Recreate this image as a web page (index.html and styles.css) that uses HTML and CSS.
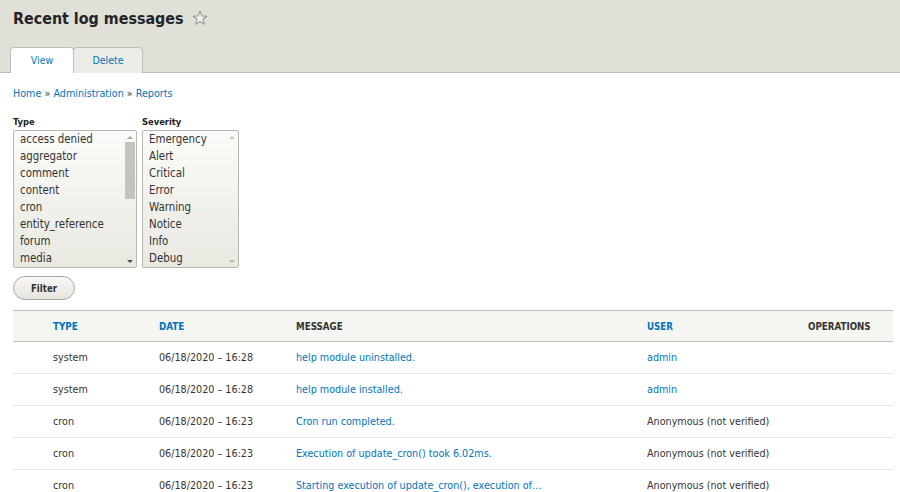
FILE: index.html
```html
<!DOCTYPE html>
<html lang="en">
<head>
<meta charset="utf-8">
<title>Recent log messages</title>
<link rel="stylesheet" href="styles.css">
</head>
<body>
<header class="page-header">
  <div class="title-row">
    <h1 class="page-title">Recent log messages</h1>
    <svg class="star" width="16" height="16" viewBox="0 0 16 16" aria-hidden="true">
      <polygon points="8,1.2 9.9,5.9 14.8,6.2 11,9.3 12.3,14.2 8,11.5 3.7,14.2 5,9.3 1.2,6.2 6.1,5.9" fill="#f2f2ee" stroke="#9a9a96" stroke-width="1.1" stroke-linejoin="round"/>
    </svg>
  </div>
  <nav class="tabs">
    <a class="tab tab-active" href="#">View</a>
    <a class="tab" href="#">Delete</a>
  </nav>
</header>

<main class="content">
  <div class="breadcrumb">
    <a href="#">Home</a> » <a href="#">Administration</a> » <a href="#">Reports</a>
  </div>

  <div class="filters">
    <div class="field">
      <div class="field-label">Type</div>
      <div class="listbox listbox-type">
        <ul class="options">
          <li>access denied</li>
          <li>aggregator</li>
          <li>comment</li>
          <li>content</li>
          <li>cron</li>
          <li>entity_reference</li>
          <li>forum</li>
          <li>media</li>
        </ul>
        <div class="scrollbar">
          <span class="arrow arrow-up"></span>
          <span class="thumb"></span>
          <span class="arrow arrow-down"></span>
        </div>
      </div>
    </div>
    <div class="field">
      <div class="field-label">Severity</div>
      <div class="listbox listbox-severity">
        <ul class="options">
          <li>Emergency</li>
          <li>Alert</li>
          <li>Critical</li>
          <li>Error</li>
          <li>Warning</li>
          <li>Notice</li>
          <li>Info</li>
          <li>Debug</li>
        </ul>
        <div class="scrollbar scrollbar-disabled">
          <span class="arrow arrow-up"></span>
          <span class="thumb thumb-none"></span>
          <span class="arrow arrow-down"></span>
        </div>
      </div>
    </div>
  </div>

  <button class="button" type="button">Filter</button>

  <table class="log-table">
    <colgroup>
      <col class="c-icon">
      <col class="c-type">
      <col class="c-date">
      <col class="c-msg">
      <col class="c-user">
      <col class="c-ops">
    </colgroup>
    <thead>
      <tr>
        <th></th>
        <th><a href="#">Type</a></th>
        <th><a href="#">Date</a></th>
        <th>Message</th>
        <th><a href="#">User</a></th>
        <th>Operations</th>
      </tr>
    </thead>
    <tbody>
      <tr>
        <td></td><td>system</td><td>06/18/2020 – 16:28</td>
        <td><a href="#">help module uninstalled.</a></td>
        <td><a href="#">admin</a></td><td></td>
      </tr>
      <tr>
        <td></td><td>system</td><td>06/18/2020 – 16:28</td>
        <td><a href="#">help module installed.</a></td>
        <td><a href="#">admin</a></td><td></td>
      </tr>
      <tr>
        <td></td><td>cron</td><td>06/18/2020 – 16:23</td>
        <td><a href="#">Cron run completed.</a></td>
        <td>Anonymous (not verified)</td><td></td>
      </tr>
      <tr>
        <td></td><td>cron</td><td>06/18/2020 – 16:23</td>
        <td><a href="#">Execution of update_cron() took 6.02ms.</a></td>
        <td>Anonymous (not verified)</td><td></td>
      </tr>
      <tr>
        <td></td><td>cron</td><td>06/18/2020 – 16:23</td>
        <td><a href="#">Starting execution of update_cron(), execution of…</a></td>
        <td>Anonymous (not verified)</td><td></td>
      </tr>
    </tbody>
  </table>
</main>
</body>
</html>
```
FILE: styles.css
```css
* { box-sizing: border-box; }

html, body {
  margin: 0;
  padding: 0;
  background: #ffffff;
}

body {
  font-family: "DejaVu Sans Condensed", "DejaVu Sans", sans-serif;
  font-stretch: condensed;
  font-size: 10.7px;
  color: #333333;
  overflow: hidden;
}

a {
  color: #0074bd;
  text-decoration: none;
}

/* Header */
.page-header {
  background: #e0e0d8;
  border-bottom: 1px solid #bfbfba;
  height: 73px;
  padding: 0 13px;
  display: flex;
  flex-direction: column;
}

.title-row {
  display: flex;
  align-items: center;
  gap: 8px;
  padding-top: 9px;
  height: 29px;
}

.page-title {
  margin: 0;
  font-size: 15.9px;
  font-weight: bold;
  line-height: 20px;
  color: #232429;
}

.star { display: block; margin-top: -2px; }

.tabs {
  margin-top: auto;
  margin-left: -3px;
  margin-bottom: -1px;
  display: flex;
}

.tab {
  display: flex;
  align-items: center;
  justify-content: center;
  height: 26px;
  border: 1px solid #bfbfba;
  border-bottom: none;
  border-radius: 4px 4px 0 0;
  background: #ecece6;
  font-size: 10.5px;
  padding-bottom: 1px;
}

.tab-active {
  background: #ffffff;
  width: 64px;
}

.tab:not(.tab-active) {
  width: 70px;
  margin-left: -1px;
}

/* Content */
.content {
  padding: 13px 7px 0 13px;
}

.breadcrumb {
  line-height: 16px;
  height: 16px;
}

.filters {
  display: flex;
  gap: 5px;
  margin-top: 13px;
}

.field-label {
  font-weight: bold;
  font-size: 9.3px;
  line-height: 14px;
  margin-bottom: 1px;
  color: #222222;
}

.listbox {
  display: flex;
  height: 138px;
  border: 1px solid #b8b8b0;
  border-radius: 2px;
  background: linear-gradient(#fbfbf9, #e9e8e1);
  overflow: hidden;
}

.listbox-type { width: 124px; }
.listbox-severity { width: 97px; }

.options {
  list-style: none;
  margin: 0;
  padding: 0 0 0 6px;
  flex: 1;
  font-size: 11.4px;
  line-height: 17px;
  color: #333333;
}

.scrollbar {
  width: 12px;
  display: flex;
  flex-direction: column;
  align-items: center;
  padding: 5px 0 4px;
}

.arrow {
  width: 0;
  height: 0;
  border-left: 3px solid transparent;
  border-right: 3px solid transparent;
}

.arrow-up { border-bottom: 3px solid #a3a3a0; }
.arrow-down { border-top: 3px solid #505050; }

.scrollbar-disabled .arrow-up { border-bottom-color: #c4c4c0; }
.scrollbar-disabled .arrow-down { border-top-color: #b4b4b0; }

.thumb {
  width: 10px;
  height: 57px;
  margin-top: 3px;
  background: #c3c3c0;
  margin-bottom: auto;
}

.thumb-none { background: transparent; }

.button {
  display: block;
  margin-top: 8px;
  width: 62px;
  height: 24px;
  padding: 0;
  border: 1px solid #a6a6a6;
  border-radius: 12px;
  background: linear-gradient(#f7f7f4, #e6e5de);
  font-family: inherit;
  font-stretch: condensed;
  font-size: 9.6px;
  font-weight: bold;
  color: #333333;
}

/* Table */
.log-table {
  margin-top: 10px;
  width: 880px;
  border-collapse: collapse;
  table-layout: fixed;
}

.c-icon { width: 28px; }
.c-type { width: 106px; }
.c-date { width: 137px; }
.c-msg { width: 351px; }
.c-user { width: 161px; }
.c-ops { width: 97px; }

.log-table thead tr {
  background: #f5f5f2;
  border-top: 1px solid #bfbfba;
  border-bottom: 1px solid #bfbfba;
}

.log-table th {
  height: 31px;
  padding: 0 12px;
  text-align: left;
  font-size: 9.7px;
  font-weight: bold;
  text-transform: uppercase;
  color: #333333;
  white-space: nowrap;
}

.log-table tbody tr {
  border-bottom: 1px solid #e6e4df;
}

.log-table td {
  height: 32px;
  padding: 0 12px;
  white-space: nowrap;
  overflow: hidden;
}
```
